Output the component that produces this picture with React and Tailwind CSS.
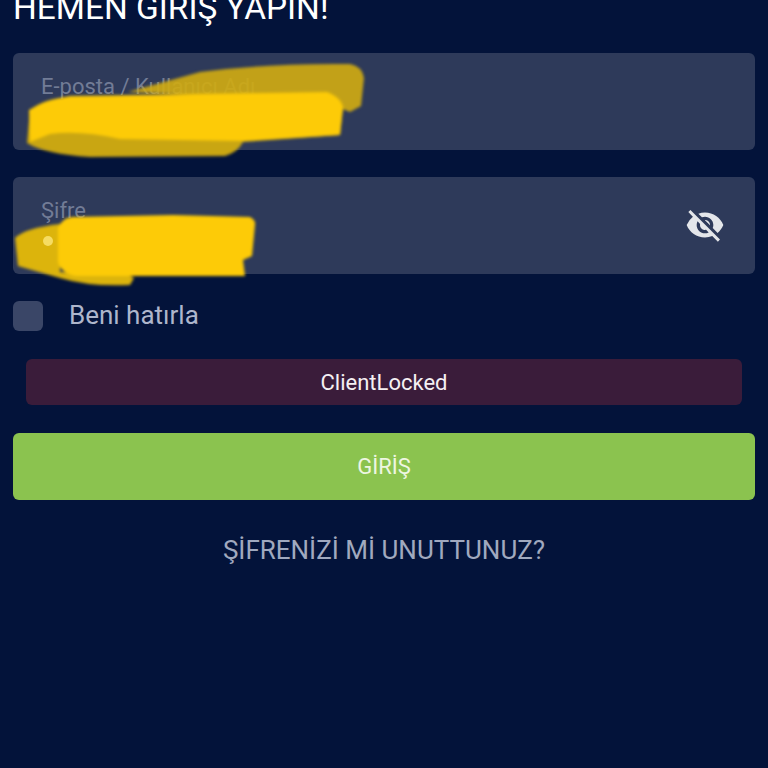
import React from 'react';
import { MdVisibilityOff } from 'react-icons/md';

const font = 'font-["Roboto","Noto_Sans",sans-serif]';

// The yellow marker strokes that hide the credentials
function Scribbles() {
  return (
    <svg className="absolute left-0 top-0 pointer-events-none" width="768" height="768" viewBox="0 0 768 768" fill="none">
      <g style={{ filter: 'blur(1.5px)' }}>
        <path d="M128 92 L200 72 Q270 63 350 64 Q362 66 364 78 L361 106 L350 112 L320 100 Z" fill="#cfaa12" fillOpacity="0.92" />
        <path d="M30 110 Q45 98 70 97 L327 93 Q342 98 343 108 L340 135 L243 142 Q238 152 225 156 L90 157 Q45 154 27 143 Z" fill="#c9a612" />
        <path d="M29 110 Q45 100 70 96 L327 92 Q342 98 343 108 L340 135 L243 141 L120 139 Q80 130 50 134 L30 142 Z" fill="#fdcb07" />
        <path d="M15 238 Q25 228 60 224 L60 272 L130 276 L134 278 L130 285 Q90 287 60 278 L18 266 Z" fill="#dcb40c" />
        <path d="M58 228 Q62 218 72 217 L173 215 L250 217 Q256 220 255 225 L252 256 L243 260 L245 276 L75 276 Q60 272 58 262 Z" fill="#fdcb07" />
      </g>
      <circle cx="48" cy="241" r="5" fill="#f6dc62" />
    </svg>
  );
}

function Field({ label, children }) {
  return (
    <div className="h-[97px] rounded-md bg-[#2e3a5a] pl-[28px] pr-[30px] flex items-center justify-between">
      <span className="text-[22px] leading-none text-[#727c96] -mt-[30px]">{label}</span>
      {children}
    </div>
  );
}

export default function App() {
  return (
    <div className={`relative h-[768px] w-[768px] overflow-hidden bg-[#03133a] px-[13px] ${font}`}>
      <h1 className="mt-[-12px] h-[40px] text-[33.4px] leading-[40px] text-white whitespace-nowrap">HEMEN GİRİŞ YAPIN!</h1>

      <div className="mt-[25px] flex flex-col gap-[27px]">
        <Field label="E-posta / Kullanıcı Adı" />
        <Field label="Şifre">
          <MdVisibilityOff size={40} className="mt-[-2px] text-[#e4e6ea]" />
        </Field>
      </div>

      <div className="mt-[27px] flex h-[30px] items-center gap-[26px]">
        <div className="h-[30px] w-[30px] rounded-md bg-[#3a4667]" />
        <span className="-mt-[2px] text-[26px] leading-none text-[#aeb6cc]">Beni hatırla</span>
      </div>

      <div className="mx-[13px] mt-[28px] flex h-[46px] items-center justify-center rounded-md bg-[#3a1c3a] text-[22px] text-[#f5f0f3]">
        ClientLocked
      </div>

      <button className="mt-[28px] flex h-[67px] w-full items-center justify-center rounded-md bg-[#8bc34f] text-[22px] text-[#eef6e2]">
        GİRİŞ
      </button>

      <p className="mt-[32px] text-center text-[26px] leading-[36px] text-[#a0a9bf]">ŞİFRENİZİ Mİ UNUTTUNUZ?</p>

      <Scribbles />
    </div>
  );
}
